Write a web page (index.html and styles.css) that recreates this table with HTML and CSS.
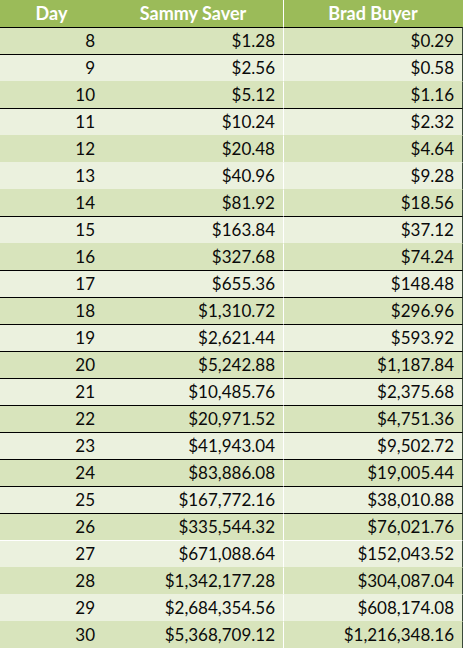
FILE: index.html
```html
<!DOCTYPE html>
<html>
<head>
<meta charset="utf-8">
<link rel="stylesheet" href="styles.css">
</head>
<body>
<table class="sheet">
  <colgroup>
    <col class="c-day">
    <col class="c-val">
    <col class="c-val">
  </colgroup>
  <thead>
    <tr class="head">
      <th>Day</th>
      <th>Sammy Saver</th>
      <th class="last">Brad Buyer</th>
    </tr>
  </thead>
  <tbody>
    <tr class="dark bk"><td>8</td><td>$1.28</td><td class="last">$0.29</td></tr>
    <tr class="light bk"><td>9</td><td>$2.56</td><td class="last">$0.58</td></tr>
    <tr class="dark"><td>10</td><td>$5.12</td><td class="last">$1.16</td></tr>
    <tr class="light bk"><td>11</td><td>$10.24</td><td class="last">$2.32</td></tr>
    <tr class="dark"><td>12</td><td>$20.48</td><td class="last">$4.64</td></tr>
    <tr class="light"><td>13</td><td>$40.96</td><td class="last">$9.28</td></tr>
    <tr class="dark"><td>14</td><td>$81.92</td><td class="last">$18.56</td></tr>
    <tr class="light bk"><td>15</td><td>$163.84</td><td class="last">$37.12</td></tr>
    <tr class="dark"><td>16</td><td>$327.68</td><td class="last">$74.24</td></tr>
    <tr class="light bk"><td>17</td><td>$655.36</td><td class="last">$148.48</td></tr>
    <tr class="dark bk"><td>18</td><td>$1,310.72</td><td class="last">$296.96</td></tr>
    <tr class="light bk"><td>19</td><td>$2,621.44</td><td class="last">$593.92</td></tr>
    <tr class="dark bk"><td>20</td><td>$5,242.88</td><td class="last">$1,187.84</td></tr>
    <tr class="light bk"><td>21</td><td>$10,485.76</td><td class="last">$2,375.68</td></tr>
    <tr class="dark bk"><td>22</td><td>$20,971.52</td><td class="last">$4,751.36</td></tr>
    <tr class="light bk"><td>23</td><td>$41,943.04</td><td class="last">$9,502.72</td></tr>
    <tr class="dark bk"><td>24</td><td>$83,886.08</td><td class="last">$19,005.44</td></tr>
    <tr class="light bk"><td>25</td><td>$167,772.16</td><td class="last">$38,010.88</td></tr>
    <tr class="dark bk"><td>26</td><td>$335,544.32</td><td class="last">$76,021.76</td></tr>
    <tr class="light wt"><td>27</td><td>$671,088.64</td><td class="last">$152,043.52</td></tr>
    <tr class="dark"><td>28</td><td>$1,342,177.28</td><td class="last">$304,087.04</td></tr>
    <tr class="light"><td>29</td><td>$2,684,354.56</td><td class="last">$608,174.08</td></tr>
    <tr class="dark"><td>30</td><td>$5,368,709.12</td><td class="last">$1,216,348.16</td></tr>
  </tbody>
</table>
</body>
</html>
```

FILE: styles.css
```css
html, body {
  margin: 0;
  padding: 0;
  background: #ffffff;
}

.sheet {
  border-collapse: separate;
  border-spacing: 0;
  table-layout: fixed;
  width: 463px;
  font-family: Lato, "Open Sans", sans-serif;
  font-size: 17px;
  color: #0a0a0a;
}

.c-day { width: 103px; }
.c-val { width: 180px; }

.sheet th,
.sheet td {
  height: 27px;
  padding: 0 8px 0 0;
  box-sizing: border-box;
  line-height: 26px;
  white-space: nowrap;
  overflow: hidden;
  border-top: 1px solid transparent;
}

.sheet td {
  text-align: right;
}

.head th {
  background: #9bbb59;
  color: #ffffff;
  font-size: 18px;
  font-weight: 700;
  text-align: center;
  padding: 0;
  border-top: 0;
  line-height: 27px;
}

.sheet .last {
  border-left: 1px solid #ffffff;
}

.sheet td.last {
  border-right: 1px solid #3a4a3a;
}

.head th.last {
  border-right: 1px solid #9bbb59;
}

.dark td { background: #d8e4bc; }
.light td { background: #ebf1de; }

.bk td { border-top-color: #000000; }
.wt td { border-top-color: #ffffff; }
.dark:not(.bk):not(.wt) td { border-top-color: #d8e4bc; }
.light:not(.bk):not(.wt) td { border-top-color: #ebf1de; }
```
